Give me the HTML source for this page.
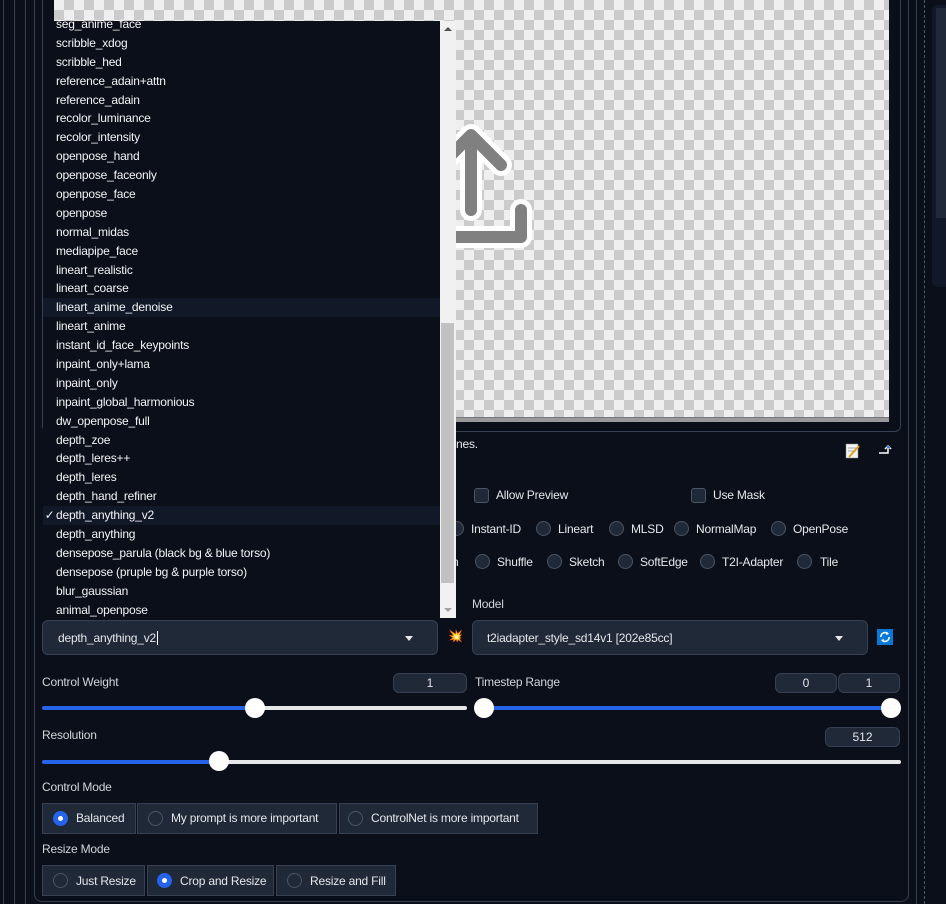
<!DOCTYPE html>
<html><head><meta charset="utf-8">
<style>
*{box-sizing:border-box;margin:0;padding:0}
body{width:946px;height:904px;background:#0b0f19;overflow:hidden;position:relative;font-family:"Liberation Sans",sans-serif;color:#e5e7eb;font-size:12px}
.a{position:absolute}
.vl{position:absolute;top:0;bottom:0;width:1px;background:#374151}
.lbl{position:absolute;font-size:12px;color:#d1d5db;letter-spacing:-0.2px}
.box{position:absolute;background:#1f2937;border:1px solid #374151;border-radius:6px}
.num{position:absolute;background:#1f2937;border:1px solid #374151;border-radius:6px;text-align:center;font-size:12px;line-height:18px;color:#e5e7eb}
.rad{position:absolute;width:15px;height:15px;border-radius:50%;background:#1f2937;border:1px solid #4b5563}
.rad.on{background:#2563eb;border-color:#2563eb}
.rad.on::after{content:"";position:absolute;left:4px;top:4px;width:5px;height:5px;border-radius:50%;background:#fff}
.cb{position:absolute;width:15px;height:15px;border-radius:3px;background:#1f2937;border:1px solid #4b5563}
.t{position:absolute;font-size:12px;color:#e5e7eb;letter-spacing:-0.2px;white-space:nowrap}
.btn{position:absolute;height:31px;background:#1f2937;border:1px solid #374151}
.trk{position:absolute;height:4px;border-radius:2px}
.th{position:absolute;width:20px;height:20px;border-radius:50%;background:#fff}
.list{position:absolute;left:43px;top:21px;width:397px;height:597px;background:#0b0f19}
.list div{height:18.9px;line-height:18.9px;padding-left:13px;font-size:12px;color:#f3f4f6;letter-spacing:-0.2px;white-space:nowrap}
.list div.h{background:#111827}
</style></head><body>
<div class="vl" style="left:3px"></div>
<div class="vl" style="left:14px"></div>
<div class="vl" style="left:25px"></div>
<div class="vl" style="left:916px"></div>
<div class="a" style="left:924px;top:0;bottom:0;border-left:1px dashed #4b5563"></div>
<div class="a" style="left:932px;top:5px;width:20px;height:282px;background:#111827;border-radius:6px"></div>
<div class="a" style="left:936px;top:8px;width:10px;height:210px;background:#1f2937"></div>
<div class="a" style="left:34px;top:-10px;width:875px;height:912px;border:1px solid #374151;border-radius:8px"></div>
<div class="a" style="left:42px;top:-10px;width:859px;height:442px;border:1px solid #374151;border-radius:6px"></div>
<div class="a" style="left:54px;top:0;width:835px;height:418px;background-color:#efefef;background-image:conic-gradient(#cbcbcb 25%,#efefef 0 50%,#cbcbcb 0 75%,#efefef 0);background-size:20px 20px"></div>
<div class="a" style="left:54px;top:417px;width:835px;height:5px;background:#999;border-top:1px solid #777"></div>
<svg class="a" style="left:400px;top:120px" width="140" height="140" viewBox="0 0 140 140">
<g fill="none" stroke-linecap="round" stroke-linejoin="round">
<path d="M71 90 V15 M41 45 L71 15 L101 45 M21 90 V117 H121 V90" stroke="#fff" stroke-width="22"/>
<path d="M71 90 V15 M41 45 L71 15 L101 45 M21 90 V117 H121 V90" stroke="#808080" stroke-width="12"/>
</g></svg>
<div class="t" style="left:456px;top:437px">nes.</div>
<svg class="a" style="left:844px;top:442px" width="18" height="18"><rect x="2" y="2" width="12" height="14" fill="#f3f3f3" stroke="#888" stroke-width=".5"/><line x1="4" y1="6" x2="12" y2="6" stroke="#aaa"/><line x1="4" y1="9" x2="12" y2="9" stroke="#aaa"/><line x1="5" y1="15" x2="15" y2="4" stroke="#e0a020" stroke-width="2"/></svg>
<svg class="a" style="left:877px;top:443px" width="16" height="14"><path d="M2 10 H11 V4 M8 6 L11 3 L14 6" stroke="#fff" stroke-width="1.5" fill="none"/><rect x="10" y="3" width="3" height="2" fill="#3b82f6"/></svg>
<div class="cb" style="left:474px;top:488px"></div><div class="t" style="left:496px;top:488px">Allow Preview</div>
<div class="cb" style="left:691px;top:488px"></div><div class="t" style="left:713px;top:488px">Use Mask</div>
<div class="rad" style="left:449px;top:521px"></div><div class="t" style="left:471px;top:522px">Instant-ID</div>
<div class="rad" style="left:536px;top:521px"></div><div class="t" style="left:558px;top:522px">Lineart</div>
<div class="rad" style="left:609px;top:521px"></div><div class="t" style="left:631px;top:522px">MLSD</div>
<div class="rad" style="left:674px;top:521px"></div><div class="t" style="left:696px;top:522px">NormalMap</div>
<div class="rad" style="left:771px;top:521px"></div><div class="t" style="left:793px;top:522px">OpenPose</div>
<div class="t" style="left:452px;top:555px">n</div>
<div class="rad" style="left:475px;top:554px"></div><div class="t" style="left:497px;top:555px">Shuffle</div>
<div class="rad" style="left:547px;top:554px"></div><div class="t" style="left:569px;top:555px">Sketch</div>
<div class="rad" style="left:618px;top:554px"></div><div class="t" style="left:640px;top:555px">SoftEdge</div>
<div class="rad" style="left:700px;top:554px"></div><div class="t" style="left:722px;top:555px">T2I-Adapter</div>
<div class="rad" style="left:797px;top:554px"></div><div class="t" style="left:820px;top:555px">Tile</div>
<div class="lbl" style="left:472px;top:597px">Model</div>
<div class="box" style="left:42px;top:620px;width:396px;height:35px"></div>
<div class="t" style="left:58px;top:631px">depth_anything_v2<span style="border-left:1px solid #fff;margin-left:1px"></span></div>
<div class="a" style="left:405px;top:636px;border:4px solid transparent;border-top:5px solid #e5e7eb"></div>
<div class="a" style="left:448px;top:629px;font-size:12px">💥</div>
<div class="box" style="left:472px;top:620px;width:396px;height:35px"></div>
<div class="t" style="left:487px;top:631px">t2iadapter_style_sd14v1 [202e85cc]</div>
<div class="a" style="left:835px;top:636px;border:4px solid transparent;border-top:5px solid #e5e7eb"></div>
<svg class="a" style="left:877px;top:629px" width="16" height="16"><rect width="16" height="16" fill="#0a78d7"/><path d="M4 8 A4 4 0 0 1 11 5 M12 8 A4 4 0 0 1 5 11" stroke="#fff" stroke-width="1.5" fill="none"/><path d="M10 3 L12 5 L9 6Z M6 13 L4 11 L7 10Z" fill="#fff"/></svg>
<div class="lbl" style="left:42px;top:675px">Control Weight</div>
<div class="num" style="left:393px;top:673px;width:74px;height:20px">1</div>
<div class="lbl" style="left:475px;top:675px">Timestep Range</div>
<div class="num" style="left:775px;top:673px;width:62px;height:20px">0</div>
<div class="num" style="left:838px;top:673px;width:62px;height:20px">1</div>
<div class="trk" style="left:42px;top:706px;width:213px;background:#2563eb"></div>
<div class="trk" style="left:255px;top:706px;width:212px;background:#e5e7eb"></div>
<div class="th" style="left:245px;top:698px"></div>
<div class="trk" style="left:484px;top:706px;width:407px;background:#2563eb"></div>
<div class="th" style="left:474px;top:698px"></div>
<div class="th" style="left:881px;top:698px"></div>
<div class="lbl" style="left:42px;top:728px">Resolution</div>
<div class="num" style="left:825px;top:727px;width:75px;height:20px">512</div>
<div class="trk" style="left:42px;top:760px;width:177px;background:#2563eb"></div>
<div class="trk" style="left:219px;top:760px;width:682px;background:#e5e7eb"></div>
<div class="th" style="left:209px;top:751px"></div>
<div class="lbl" style="left:42px;top:780px">Control Mode</div>
<div class="btn" style="left:42px;top:803px;width:94px"></div>
<div class="rad on" style="left:53px;top:811px"></div><div class="t" style="left:76px;top:811px">Balanced</div>
<div class="btn" style="left:137px;top:803px;width:200px"></div>
<div class="rad" style="left:148px;top:811px"></div><div class="t" style="left:171px;top:811px">My prompt is more important</div>
<div class="btn" style="left:339px;top:803px;width:199px"></div>
<div class="rad" style="left:348px;top:811px"></div><div class="t" style="left:371px;top:811px">ControlNet is more important</div>
<div class="lbl" style="left:42px;top:842px">Resize Mode</div>
<div class="btn" style="left:42px;top:865px;width:103px"></div>
<div class="rad" style="left:53px;top:873px"></div><div class="t" style="left:76px;top:874px">Just Resize</div>
<div class="btn" style="left:147px;top:865px;width:127px"></div>
<div class="rad on" style="left:157px;top:873px"></div><div class="t" style="left:180px;top:874px">Crop and Resize</div>
<div class="btn" style="left:276px;top:865px;width:120px"></div>
<div class="rad" style="left:287px;top:873px"></div><div class="t" style="left:310px;top:874px">Resize and Fill</div>
<div class="list">
<div style="margin-top:-6px">seg_anime_face</div><div>scribble_xdog</div><div>scribble_hed</div><div>reference_adain+attn</div><div>reference_adain</div><div>recolor_luminance</div><div>recolor_intensity</div><div>openpose_hand</div><div>openpose_faceonly</div><div>openpose_face</div><div>openpose</div><div>normal_midas</div><div>mediapipe_face</div><div>lineart_realistic</div><div>lineart_coarse</div><div class="h">lineart_anime_denoise</div><div>lineart_anime</div><div>instant_id_face_keypoints</div><div>inpaint_only+lama</div><div>inpaint_only</div><div>inpaint_global_harmonious</div><div>dw_openpose_full</div><div>depth_zoe</div><div>depth_leres++</div><div>depth_leres</div><div>depth_hand_refiner</div><div class="h" style="padding-left:0"><span style="display:inline-block;width:13px;text-align:center">✓</span>depth_anything_v2</div><div>depth_anything</div><div>densepose_parula (black bg &amp; blue torso)</div><div>densepose (pruple bg &amp; purple torso)</div><div>blur_gaussian</div><div>animal_openpose</div>
</div>
<div class="a" style="left:440px;top:21px;width:16px;height:597px;background:#f1f1f1"></div>
<div class="a" style="left:441px;top:323px;width:13px;height:260px;background:#c1c1c1"></div>
<div class="a" style="left:444px;top:27px;border:4px solid transparent;border-bottom:4px solid #505050;border-top:0"></div>
<div class="a" style="left:444px;top:608px;border:4px solid transparent;border-top:4px solid #a3a3a3;border-bottom:0"></div>
</body></html>
